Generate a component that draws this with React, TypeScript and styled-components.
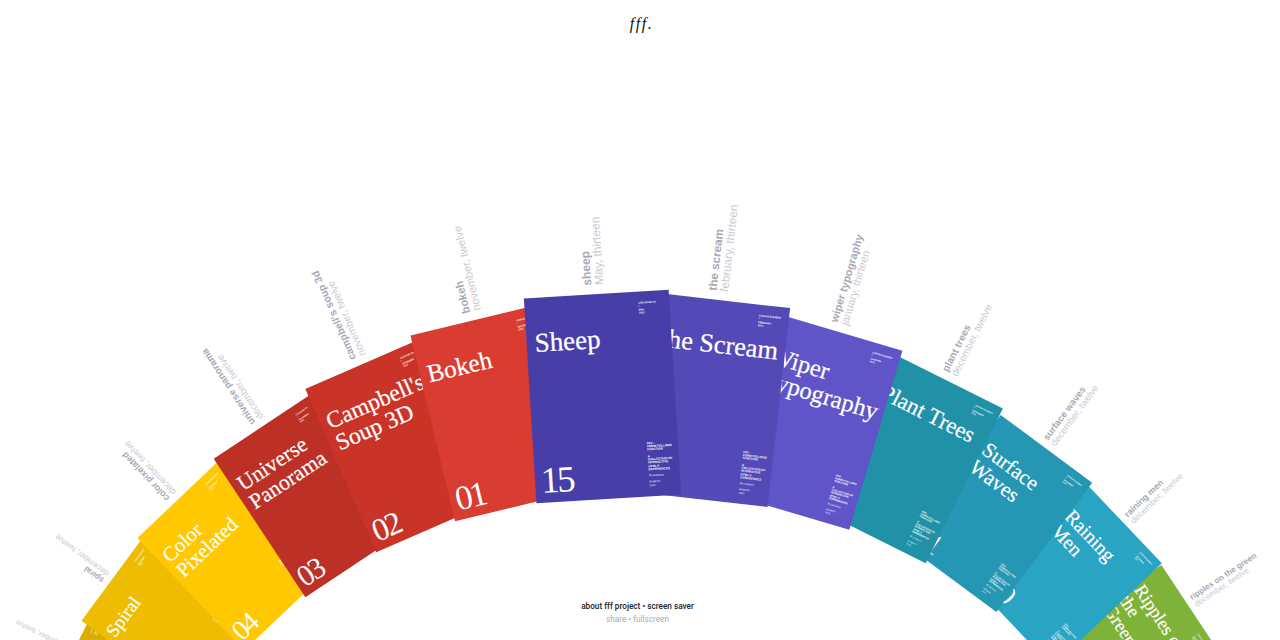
import React from 'react'
import styled, { createGlobalStyle } from 'styled-components'

type Experiment = {
  title: React.ReactNode
  name: string
  date: string
  tag: string
  month: string
  number: string
  color: string
  angle: number
  x: number
  y: number
  scale: number
  depth: number
}

const experiments: Experiment[] = [
  { title: 'Rush', name: 'rush', date: 'december, twelve', tag: 'CSS EFFECTS', month: 'DECEMBER', number: '06', color: '#d9ad00', angle: -63.5, x: 130, y: 681, scale: 0.63, depth: 2 },
  { title: 'Spiral', name: 'spiral', date: 'december, twelve', tag: 'CANVAS ELEMENT', month: 'DECEMBER', number: '05', color: '#eebc00', angle: -53.5, x: 168, y: 622, scale: 0.693, depth: 3 },
  { title: <>Color<br />Pixelated</>, name: 'color pixelated', date: 'december, twelve', tag: 'CANVAS ELEMENT', month: 'DECEMBER', number: '04', color: '#ffc800', angle: -43.5, x: 230, y: 556.5, scale: 0.756, depth: 4 },
  { title: <>Universe<br />Panorama</>, name: 'universe panorama', date: 'december, twelve', tag: 'CSS EFFECTS', month: 'DECEMBER', number: '03', color: '#bc3026', angle: -33.5, x: 308, y: 495, scale: 0.81, depth: 5 },
  { title: <>Campbell's<br />Soup 3D</>, name: "campbell's soup 3d", date: 'november, twelve', tag: 'CSS EFFECTS', month: 'NOVEMBER', number: '02', color: '#ca3428', angle: -23.5, x: 398, y: 445.5, scale: 0.868, depth: 6 },
  { title: 'Bokeh', name: 'bokeh', date: 'november, twelve', tag: 'CANVAS ELEMENT', month: 'NOVEMBER', number: '01', color: '#d93c30', angle: -13.5, x: 498, y: 412, scale: 0.932, depth: 7 },
  { title: 'Sheep', name: 'sheep', date: 'May, thirteen', tag: 'CSS EFFECTS', month: 'MAY', number: '15', color: '#483ea8', angle: -3.5, x: 602.5, y: 396, scale: 1, depth: 8 },
  { title: 'The Scream', name: 'the scream', date: 'february, thirteen', tag: 'CANVAS ELEMENT', month: 'FEBRUARY', number: '14', color: '#5349b7', angle: 6.5, x: 708.5, y: 399.5, scale: 0.976, depth: 7 },
  { title: <>Wiper<br />Typography</>, name: 'wiper typography', date: 'january, thirteen', tag: 'CANVAS ELEMENT', month: 'JANUARY', number: '13', color: '#5f55c8', angle: 16.5, x: 812, y: 421, scale: 0.911, depth: 6 },
  { title: 'Plant Trees', name: 'plant trees', date: 'december, twelve', tag: 'CANVAS ELEMENT', month: 'DECEMBER', number: '12', color: '#2191a8', angle: 26.5, x: 909.5, y: 458, scale: 0.844, depth: 5 },
  { title: <>Surface<br />Waves</>, name: 'surface waves', date: 'december, twelve', tag: 'CANVAS ELEMENT', month: 'DECEMBER', number: '11', color: '#2596b3', angle: 36.5, x: 998.5, y: 513, scale: 0.785, depth: 4 },
  { title: <>Raining<br />Men</>, name: 'raining men', date: 'december, twelve', tag: 'CANVAS ELEMENT', month: 'DECEMBER', number: '10', color: '#29a4c2', angle: 46.5, x: 1070.5, y: 576, scale: 0.735, depth: 3 },
  { title: <>Ripples on<br />the<br />Green</>, name: 'ripples on the green', date: 'december, twelve', tag: 'CANVAS ELEMENT', month: 'DECEMBER', number: '09', color: '#7fb239', angle: 56.5, x: 1130, y: 644, scale: 0.68, depth: 2 },
]

const App: React.FC = () => {
  return (
    <PAGE>
      <GlobalStyle />
      <LOGO>fff.</LOGO>
      {experiments.map((item) => (
        <CARD key={item.name} $angle={item.angle} $x={item.x} $y={item.y} $scale={item.scale} $color={item.color} $depth={item.depth}>
          <LABEL>
            <strong>{item.name}</strong>
            <span>{item.date}</span>
          </LABEL>
          <TAG>
            {item.tag}
            <br />/<br />
            {item.month}
            <br />2013
          </TAG>
          <TITLE>{item.title}</TITLE>
          <NUMBER>{item.number}</NUMBER>
          <COLOPHON>
            <div>FFF -<br />FORM FOLLOWS<br />FUNCTION</div>
            <p>A<br />COLLECTION OF<br />INTERACTIVE<br />HTML 5<br />EXPERIENCES</p>
            <small>fff.cool/about</small>
            <small>designed<br />2013</small>
          </COLOPHON>
        </CARD>
      ))}
      <FOOTER>
        <MAINLINKS>about fff project • screen saver</MAINLINKS>
        <SUBLINKS>share • fullscreen</SUBLINKS>
      </FOOTER>
    </PAGE>
  )
}

const GlobalStyle = createGlobalStyle`
  html, body {
    margin: 0;
    padding: 0;
    background: #fff;
  }
`

const PAGE = styled.div`
  position: relative;
  width: 1280px;
  height: 640px;
  overflow: hidden;
  display: flex;
  flex-direction: column;
  justify-content: space-between;
  align-items: center;
  font-family: 'Liberation Sans', Arial, sans-serif;
`

const LOGO = styled.h1`
  margin: 13px 0 0 3px;
  font: italic 400 16px/22px 'Liberation Serif', 'Times New Roman', serif;
  letter-spacing: 1.5px;
  color: #111;
`

const CARD = styled.div<{ $angle: number; $x: number; $y: number; $scale: number; $color: string; $depth: number }>`
  position: absolute;
  left: ${(p) => p.$x - 72.5}px;
  top: ${(p) => p.$y - 102.5}px;
  width: 145px;
  height: 205px;
  background: ${(p) => p.$color};
  color: #fff;
  z-index: ${(p) => p.$depth};
  transform: rotate(${(p) => p.$angle}deg) scale(${(p) => p.$scale});
`

const LABEL = styled.div`
  position: absolute;
  left: 58px;
  bottom: calc(100% + 9px);
  width: 130px;
  transform-origin: left bottom;
  transform: rotate(-90deg) translateY(100%);
  display: flex;
  flex-direction: column;
  font-size: 12px;
  line-height: 12px;
  white-space: nowrap;

  strong {
    color: #a9a9b6;
    font-weight: 700;
  }

  span {
    color: #cacad2;
  }
`

const TAG = styled.div`
  position: absolute;
  left: 114px;
  top: 10px;
  font-size: 2.5px;
  font-weight: 700;
  line-height: 3.4px;
  white-space: nowrap;
`

const TITLE = styled.div`
  position: absolute;
  left: 8px;
  top: 32px;
  font: 400 27px/27px 'Liberation Serif', 'Times New Roman', serif;
  -webkit-text-stroke: 0.25px #fff;
  white-space: nowrap;
`

const NUMBER = styled.div`
  position: absolute;
  left: 6px;
  bottom: 0;
  font: 400 37px/44px 'Liberation Serif', 'Times New Roman', serif;
  letter-spacing: -2.5px;
`

const COLOPHON = styled.div`
  position: absolute;
  left: 114px;
  bottom: 9px;
  font-size: 3px;
  font-weight: 700;
  line-height: 3.3px;
  white-space: nowrap;

  p {
    margin: 3px 0;
  }

  small {
    display: block;
    margin-top: 3px;
    font-size: 2.6px;
    font-weight: 400;
  }
`

const FOOTER = styled.div`
  position: relative;
  z-index: 20;
  margin: 0 5px 14px 0;
  text-align: center;
  font-family: Roboto, 'Liberation Sans', sans-serif;
  font-size: 8.2px;
  line-height: 13px;
`

const MAINLINKS = styled.div`
  color: #222;
  font-weight: 500;
`

const SUBLINKS = styled.div`
  color: #aaa;
`

export default App
